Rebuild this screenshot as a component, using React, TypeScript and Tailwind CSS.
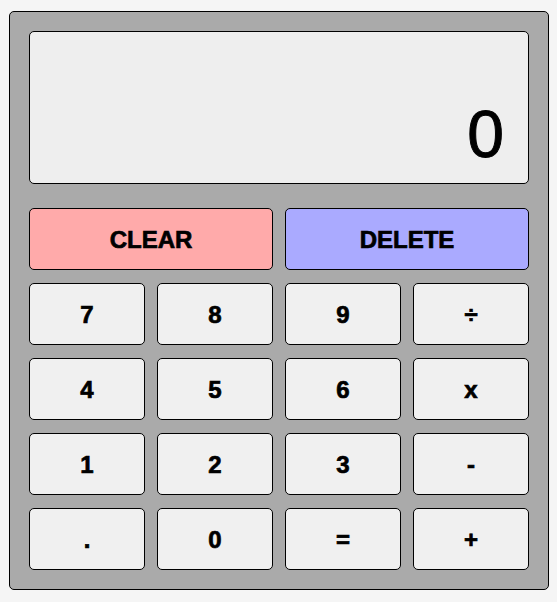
import React from "react";

const keys = ["7", "8", "9", "÷", "4", "5", "6", "x", "1", "2", "3", "-", ".", "0", "=", "+"];

export default function App() {
  return (
    <div className="min-h-[602px] w-full bg-[#f5f5f5] pt-[11px] pl-[9px]" style={{ fontFamily: '"Liberation Sans", Arial, sans-serif' }}>
      <div className="w-[540px] rounded-[5px] border border-black bg-[#aaaaaa] p-[19px]">
        <div className="flex h-[153px] items-end justify-end rounded-[5px] border border-black bg-[#eeeeee] pr-[24px] pb-[16px] text-[66px] leading-none text-black [-webkit-text-stroke:1px_black]">
          0
        </div>
        <div className="mt-[24px] grid grid-cols-2 gap-x-[12px]">
          <button className="flex h-[62px] items-center justify-center rounded-[5px] border border-black bg-[#ffaaaa] pt-[2px] text-[24px] font-bold text-black [-webkit-text-stroke:0.7px_black]">
            CLEAR
          </button>
          <button className="flex h-[62px] items-center justify-center rounded-[5px] border border-black bg-[#aaaaff] pt-[2px] text-[24px] font-bold text-black [-webkit-text-stroke:0.7px_black]">
            DELETE
          </button>
        </div>
        <div className="mt-[13px] grid grid-cols-4 gap-x-[12px] gap-y-[13px]">
          {keys.map((k) => (
            <button
              key={k}
              className="flex h-[62px] items-center justify-center rounded-[5px] border border-black bg-[#f0f0f0] pt-[2px] text-[24px] font-bold text-black [-webkit-text-stroke:0.7px_black]"
            >
              {k}
            </button>
          ))}
        </div>
      </div>
    </div>
  );
}
